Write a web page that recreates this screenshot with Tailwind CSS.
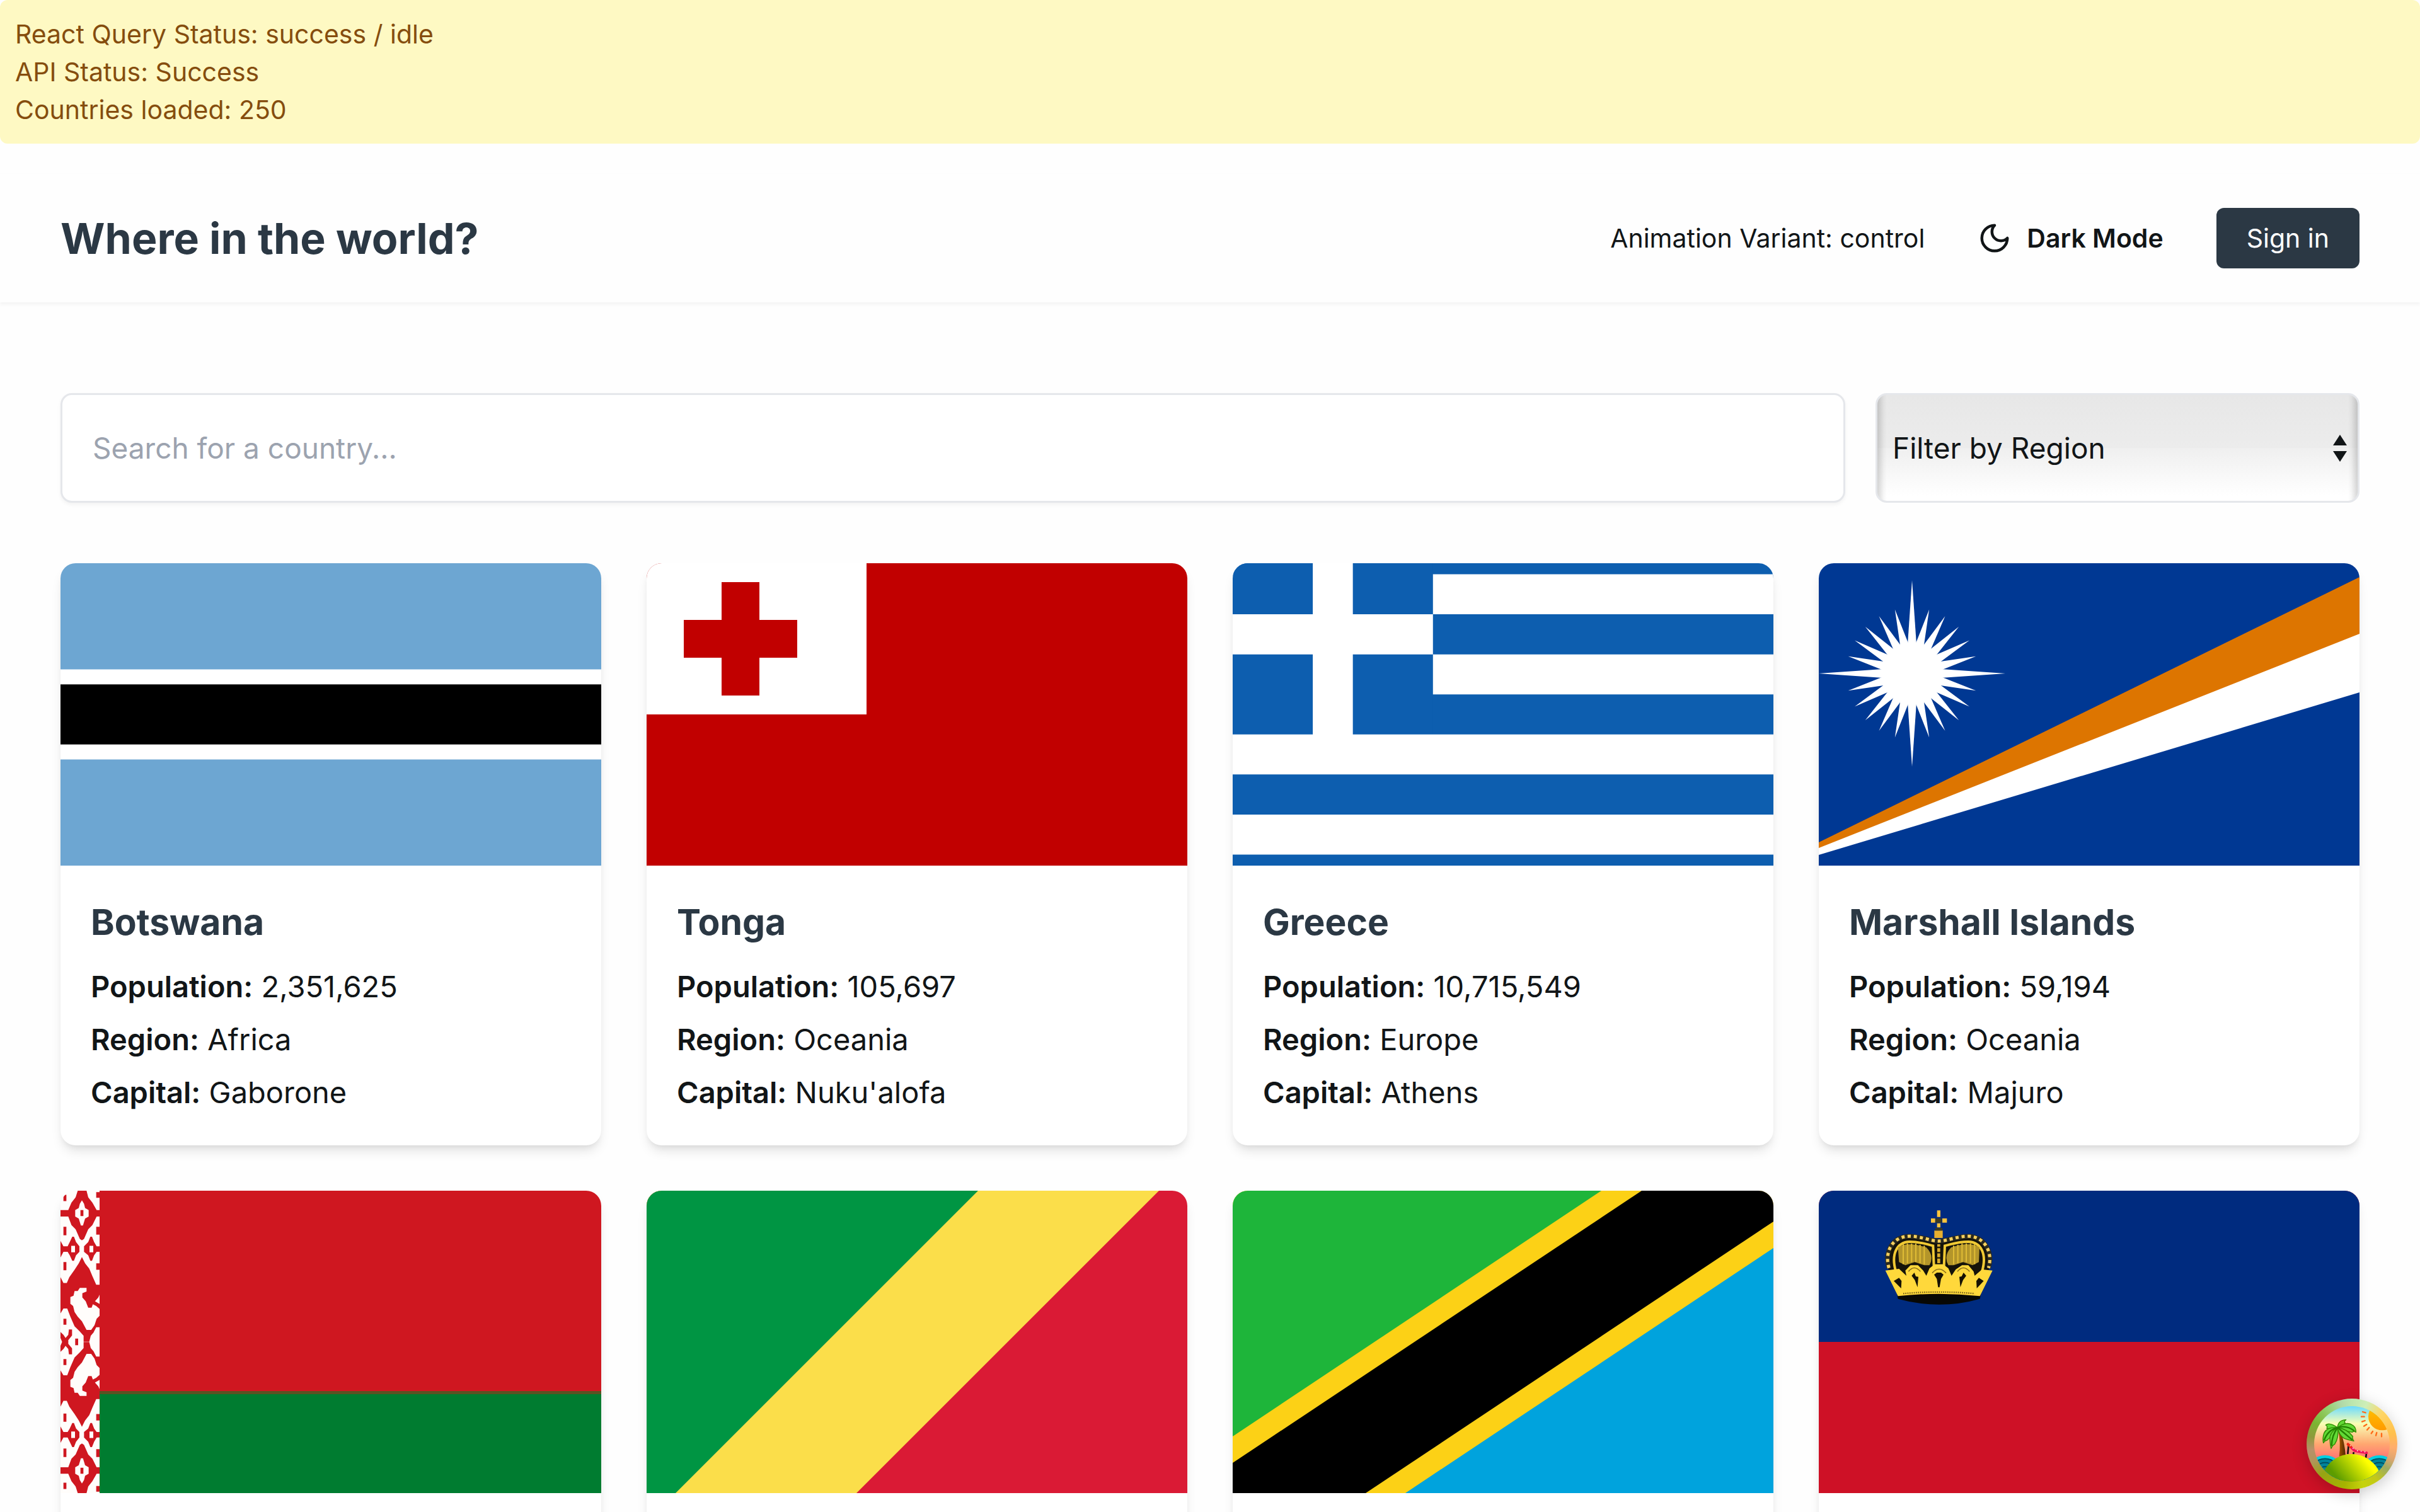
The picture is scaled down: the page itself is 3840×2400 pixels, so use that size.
<!DOCTYPE html>
<html lang="en">
<head>
<meta charset="utf-8">
<title>Where in the world?</title>
<script src="https://cdn.jsdelivr.net/npm/@tailwindcss/browser@4"></script>
</head>
<body class="bg-[#fefefe] font-[Inter,sans-serif] text-[#111517]">

<div class="mb-12 rounded-[12px] bg-[#fef9c3] p-6 text-[41px] leading-[60px] text-[#854d0e]">
  <p>React Query Status: success / idle</p>
  <p>API Status: Success</p>
  <p>Countries loaded: 250</p>
</div>

<header class="flex items-center justify-between px-24 py-12 shadow-[0_3px_6px_rgba(0,0,0,0.05)]">
  <h1 class="text-[68px] leading-[108px] font-bold text-[#2b3844]">Where in the world?</h1>
  <div class="flex items-center text-[41px] leading-[60px]">
    <span class="mr-[84px]">Animation Variant: control</span>
    <button type="button" class="mr-[84px] flex items-center gap-6 font-semibold">
      <svg class="size-[54px]" viewBox="0 0 24 24" fill="none" stroke="currentColor" stroke-width="2" stroke-linecap="round" stroke-linejoin="round" aria-hidden="true"><path d="M12 3a6 6 0 0 0 9 9 9 9 0 1 1-9-9Z"/></svg>
      Dark Mode
    </button>
    <button type="button" class="h-24 rounded-[12px] bg-[#2b3844] px-12 text-white">Sign in</button>
  </div>
</header>

<main class="px-24 pt-36 pb-24">
  <div class="mb-24 flex gap-12">
    <input type="text" aria-label="Search for a country" placeholder="Search for a country..." class="h-[174px] min-w-0 flex-1 rounded-[18px] border-[3px] border-[#e5e7eb] bg-white px-12 text-[46px] shadow-[0_3px_6px_rgba(0,0,0,0.05)] placeholder:text-[#9ca3af]">
    <div class="relative w-[768px]">
      <select aria-label="Filter by Region" class="h-[174px] w-full appearance-none rounded-[18px] border-[3px] border-[#e5e7eb] bg-[linear-gradient(90deg,rgba(0,0,0,0.16),rgba(0,0,0,0.03)_10px,transparent_15px),linear-gradient(270deg,rgba(0,0,0,0.16),rgba(0,0,0,0.03)_10px,transparent_15px),linear-gradient(#e7e7e7,#ececec_50%,#efefef_50%,#ffffff_95%)] px-6 text-[46px]">
        <option>Filter by Region</option>
      </select>
      <svg class="pointer-events-none absolute top-[66px] right-[20px] h-[43px] w-[22px]" viewBox="0 0 22 43" fill="#111517" aria-hidden="true"><path d="M11 0 22 17H0ZM0 26H22L11 43Z"/></svg>
    </div>
  </div>

  <div class="grid grid-cols-4 gap-[72px]">

    <article class="overflow-hidden rounded-[24px] bg-white shadow-[0_12px_18px_-3px_rgba(0,0,0,0.1),0_6px_12px_-6px_rgba(0,0,0,0.1)]">
      <svg class="block h-[480px] w-full" viewBox="0 0 36 24" preserveAspectRatio="xMidYMid slice" role="img" aria-label="Flag of Botswana">
        <rect width="36" height="24" fill="#6da6d2"/><rect y="9" width="36" height="6" fill="#fff"/><rect y="10" width="36" height="4" fill="#000"/>
      </svg>
      <div class="p-12 text-[47px] leading-[72px]">
        <h2 class="mb-6 text-[57px] leading-[84px] font-bold text-[#2b3844]">Botswana</h2>
        <p class="mb-3"><b class="font-semibold">Population:</b> 2,351,625</p>
        <p class="mb-3"><b class="font-semibold">Region:</b> Africa</p>
        <p><b class="font-semibold">Capital:</b> Gaborone</p>
      </div>
    </article>

    <article class="overflow-hidden rounded-[24px] bg-white shadow-[0_12px_18px_-3px_rgba(0,0,0,0.1),0_6px_12px_-6px_rgba(0,0,0,0.1)]">
      <svg class="block h-[480px] w-full" viewBox="0 0 96 48" preserveAspectRatio="xMidYMid slice" role="img" aria-label="Flag of Tonga">
        <rect width="96" height="48" fill="#c10000"/><rect width="40" height="24" fill="#fff"/><path d="M17 3h6v6h6v6h-6v6h-6v-6h-6V9h6Z" fill="#c10000"/>
      </svg>
      <div class="p-12 text-[47px] leading-[72px]">
        <h2 class="mb-6 text-[57px] leading-[84px] font-bold text-[#2b3844]">Tonga</h2>
        <p class="mb-3"><b class="font-semibold">Population:</b> 105,697</p>
        <p class="mb-3"><b class="font-semibold">Region:</b> Oceania</p>
        <p><b class="font-semibold">Capital:</b> Nuku'alofa</p>
      </div>
    </article>

    <article class="overflow-hidden rounded-[24px] bg-white shadow-[0_12px_18px_-3px_rgba(0,0,0,0.1),0_6px_12px_-6px_rgba(0,0,0,0.1)]">
      <svg class="block h-[480px] w-full" viewBox="0 0 27 18" preserveAspectRatio="xMidYMid slice" role="img" aria-label="Flag of Greece">
        <rect width="27" height="18" fill="#0d5eaf"/>
        <path d="M0 3H27M0 7H27M0 15H27" stroke="#fff" stroke-width="2"/>
        <rect width="10" height="10" fill="#0d5eaf"/><path d="M5 0V11M0 5H10M0 11H27" stroke="#fff" stroke-width="2"/>
      </svg>
      <div class="p-12 text-[47px] leading-[72px]">
        <h2 class="mb-6 text-[57px] leading-[84px] font-bold text-[#2b3844]">Greece</h2>
        <p class="mb-3"><b class="font-semibold">Population:</b> 10,715,549</p>
        <p class="mb-3"><b class="font-semibold">Region:</b> Europe</p>
        <p><b class="font-semibold">Capital:</b> Athens</p>
      </div>
    </article>

    <article class="overflow-hidden rounded-[24px] bg-white shadow-[0_12px_18px_-3px_rgba(0,0,0,0.1),0_6px_12px_-6px_rgba(0,0,0,0.1)]">
      <svg class="block h-[480px] w-full" viewBox="0 0 858 480" preserveAspectRatio="xMidYMid slice" role="img" aria-label="Flag of Marshall Islands">
        <rect width="858" height="480" fill="#003893"/>
        <path d="M0 443 858 22V113L0 453Z" fill="#dd7500"/><path d="M0 452 858 112V205L0 463Z" fill="#fff"/>
        <g transform="translate(148 175)" fill="#fff">
          <circle r="48"/>
          <g id="q">
            <path d="M-7-46 0-148 7-46Z"/>
            <path id="ray" d="M-7-45 0-105 7-45Z" transform="rotate(15)"/>
            <use href="#ray" transform="rotate(15)"/><use href="#ray" transform="rotate(30)"/><use href="#ray" transform="rotate(45)"/><use href="#ray" transform="rotate(60)"/>
          </g>
          <use href="#q" transform="rotate(90)"/><use href="#q" transform="rotate(180)"/><use href="#q" transform="rotate(270)"/>
        </g>
      </svg>
      <div class="p-12 text-[47px] leading-[72px]">
        <h2 class="mb-6 text-[57px] leading-[84px] font-bold text-[#2b3844]">Marshall Islands</h2>
        <p class="mb-3"><b class="font-semibold">Population:</b> 59,194</p>
        <p class="mb-3"><b class="font-semibold">Region:</b> Oceania</p>
        <p><b class="font-semibold">Capital:</b> Majuro</p>
      </div>
    </article>

    <article class="overflow-hidden rounded-[24px] bg-white shadow-[0_12px_18px_-3px_rgba(0,0,0,0.1),0_6px_12px_-6px_rgba(0,0,0,0.1)]">
      <svg class="block h-[480px] w-full" viewBox="0 0 858 480" preserveAspectRatio="xMidYMid slice" role="img" aria-label="Flag of Belarus">
        <rect width="62" height="480" fill="#fffdfb"/>
        <g transform="scale(.33333 .33827) translate(-48 -59)">
          <g id="orn" fill="#cf1720">
            <path d="M130 59H172L180 90 200 115 220 150H237V180H220L200 220 180 240 160 285 150 292 140 285 120 240 100 220 85 180H48V150H85L100 115 120 90Z"/>
            <path d="M150 104 160 120 165 140 182 150V180L165 190 155 222H145L135 190 118 180V150L135 140 140 120Z" fill="#fffdfb"/>
            <path d="M143 150H157V178H143ZM62 78H76V108H62ZM62 228H76V268H62ZM62 394H76V432H62ZM218 66H237V92H218ZM218 228H237V265H218ZM218 400H237V430H218Z"/>
            <path d="M48 295 62 320H82L92 300 104 275H112L122 300 138 320V346L122 362 112 388H104L92 362 82 346H62L48 372ZM237 320H220L208 300 198 275H190L180 300 160 320V346L180 362 190 388H198L208 362 220 346H237Z"/>
            <path d="M99 318H117V348H99ZM186 318H204V348H186Z" fill="#fffdfb"/>
            <path d="M150 370 165 400 185 425 200 460 218 500H237V700H218L205 725 192 740 185 768H158V740L140 720 115 695 95 650 80 612H62L48 635V465L62 492H78L90 465 115 430 135 400Z"/>
            <path d="M172 515H140L130 530 115 530 110 552 95 558V590L108 600 115 628 130 650 150 672 172 712H194L210 690 220 660 235 645V615L218 600 202 592 196 608H180L168 578 152 560V540L172 532ZM237 540 228 560 212 578 237 592Z" fill="#fffdfb"/>
            <path d="M62 660H76V688H62ZM118 753H132V769H118ZM48 722 62 735 72 750 85 735 88 710H103V738L85 760V769H56L48 750Z"/>
          </g>
          <use href="#orn" transform="matrix(1 0 0 -1 0 1537)"/>
        </g>
        <rect x="62" width="796" height="320" fill="#cf1720"/><rect x="62" y="320" width="796" height="160" fill="#007c30"/><rect x="62" y="318" width="796" height="5" fill="#5a5222"/>
      </svg>
      <div class="h-[444px] p-12"></div>
    </article>

    <article class="overflow-hidden rounded-[24px] bg-white shadow-[0_12px_18px_-3px_rgba(0,0,0,0.1),0_6px_12px_-6px_rgba(0,0,0,0.1)]">
      <svg class="block h-[480px] w-full" viewBox="0 0 858 480" preserveAspectRatio="xMidYMid slice" role="img" aria-label="Flag of the Republic of the Congo">
        <rect width="858" height="480" fill="#da1a35"/><path d="M0 0H813L333 480H0Z" fill="#fbde4a"/><path d="M0 0H526L46 480H0Z" fill="#009543"/>
      </svg>
      <div class="h-[444px] p-12"></div>
    </article>

    <article class="overflow-hidden rounded-[24px] bg-white shadow-[0_12px_18px_-3px_rgba(0,0,0,0.1),0_6px_12px_-6px_rgba(0,0,0,0.1)]">
      <svg class="block h-[480px] w-full" viewBox="0 0 858 480" preserveAspectRatio="xMidYMid slice" role="img" aria-label="Flag of Tanzania">
        <rect width="858" height="480" fill="#fcd116"/><path d="M0 0H585L0 390Z" fill="#1eb53a"/><path d="M858 480H274L858 91Z" fill="#00a3dd"/><path d="M649 0H858V49L211 480H0V432Z"/>
      </svg>
      <div class="h-[444px] p-12"></div>
    </article>

    <article class="overflow-hidden rounded-[24px] bg-white shadow-[0_12px_18px_-3px_rgba(0,0,0,0.1),0_6px_12px_-6px_rgba(0,0,0,0.1)]">
      <svg class="block h-[480px] w-full" viewBox="0 0 858 480" preserveAspectRatio="xMidYMid slice" role="img" aria-label="Flag of Liechtenstein">
        <rect width="858" height="480" fill="#ce1126"/><rect width="858" height="240" fill="#002b7f"/>
        <g transform="translate(74 0) scale(.33333)">
          <path d="M150 490Q350 470 550 490L545 515Q350 570 155 515Z" fill="#080804"/>
          <path d="M110 375C85 290 125 220 200 215 260 210 310 235 348 250 390 235 440 210 500 215 570 220 610 290 588 375L540 440H160Z" fill="#15130a"/>
          <path d="M112 368C90 295 125 220 205 217 260 215 310 240 348 240 390 240 440 215 495 217 570 222 608 295 586 368" fill="none" stroke="#2a2a20" stroke-width="22"/>
          <path d="M112 368C90 295 125 220 205 217 260 215 310 240 348 240 390 240 440 215 495 217 570 222 608 295 586 368" fill="none" stroke="#f5d060" stroke-width="15" stroke-dasharray="15 14"/>
          <path d="M145 385C120 300 150 245 210 243 260 243 290 255 322 262L326 360M555 385C580 300 550 245 490 243 440 243 410 255 378 262L374 360" fill="none" stroke="#f0c934" stroke-width="12"/>
          <path d="M155 270Q200 240 290 270 330 310 305 355H280L235 340 190 355 160 340ZM543 270Q498 240 408 270 370 310 395 355H420L465 340 510 355 540 340Z" fill="#b3952a"/>
          <path d="M180 255V350M200 252V345M220 252V340M240 252V340M260 258V345M280 262V350M520 255V350M500 252V345M480 252V340M460 252V340M440 258V345M420 262V350" stroke="#e0bc35" stroke-width="6"/>
          <path d="M95 380 160 372 195 405 190 380 215 355 250 355 275 380 290 405 305 370 330 350H370L395 370 410 405 430 375 460 355H490L515 385 520 405 555 375 605 380 545 502Q350 480 155 502Z" fill="#ffd83b"/>
          <path d="M342 255H356V345H342Z" fill="#d9ac2c"/><path d="M340 270H358M340 295H358M340 320H358" stroke="#221c08" stroke-width="7"/>
          <path d="M328 190H368V225H328Z" fill="#e8b030"/><path d="M341 94H357V125H341ZM312 132H332V152H312ZM366 132H388V152H366ZM341 155H357V175H341Z" fill="#fbc33c"/><path d="M334 132H363V152H334ZM332 178H366V190H332Z" fill="#3d3a20"/>
          <path d="M327 400 340 390H360L372 400 360 420 353 460H346L340 420ZM220 405 233 390 240 408 252 410 248 460 235 425ZM480 405 467 390 458 408 447 410 452 460 465 425ZM135 430 160 415 172 430 170 465ZM563 430 540 415 528 430 530 465Z" fill="#171204"/>
          <path d="M205 385Q232 350 262 385M318 392Q350 355 384 392M438 385Q466 350 496 385" fill="none" stroke="#8a701b" stroke-width="5"/>
          <path d="M180 490Q350 475 520 490" fill="none" stroke="#75601a" stroke-width="7" stroke-dasharray="5 5"/>
        </g>
      </svg>
      <div class="h-[444px] p-12"></div>
    </article>

  </div>
</main>

<button type="button" aria-label="Open Tanstack query devtools" class="fixed right-9 bottom-9 size-36 rounded-full bg-[conic-gradient(#bce6ae,#cdeeb8_20deg,#ffd564_45deg,#ffc04c_75deg,#ffad6c_95deg,#dfa570_110deg,#9bab62_125deg,#c4c818_145deg,#c5d30c_165deg,#a6b400_190deg,#96a414_225deg,#b09558_245deg,#b8906a_262deg,#8f9a3c_280deg,#7cb432_300deg,#94cf6c_325deg,#b0d8a8_345deg,#bce6ae)] p-3 shadow-[0_6px_24px_rgba(0,0,0,0.2)]">
  <svg class="size-full" viewBox="156 126 360 360" aria-hidden="true">
    <defs>
      <clipPath id="c"><circle cx="336" cy="306" r="180"/></clipPath>
      <linearGradient id="sky" x1="0" y1="0" x2="0" y2="1"><stop offset="0" stop-color="#6bdaff"/><stop offset=".23" stop-color="#f9ffb5"/><stop offset=".5" stop-color="#ffa770"/><stop offset=".7" stop-color="#ff7373"/></linearGradient>
      <linearGradient id="hill" gradientUnits="userSpaceOnUse" x1="390" y1="370" x2="270" y2="470"><stop offset="0" stop-color="#ffff00"/><stop offset="1" stop-color="#5c9c00"/></linearGradient>
      <linearGradient id="sun" x1="0" y1="0" x2="0" y2="1"><stop offset="0" stop-color="#ffc800"/><stop offset="1" stop-color="#ff9a00"/></linearGradient>
      <linearGradient id="trunk"><stop offset="0" stop-color="#b25c00"/><stop offset="1" stop-color="#4d2600"/></linearGradient>
    </defs>
    <g clip-path="url(#c)">
      <rect x="156" y="126" width="360" height="360" fill="url(#sky)"/>
      <circle cx="480" cy="175" r="66" fill="url(#sun)"/>
      <path d="M387 153 401 157M381 176H395M384 200 398 195M393 221 406 213M408 239 418 228M428 256 435 246M450 266 454 252M477 271V256" stroke="#ff6a18" stroke-width="7" stroke-linecap="round"/>
      <g fill="#00839a" stroke="#004b5c" stroke-width="5"><circle cx="208" cy="450" r="90" fill="#00cfe2" stroke="none"/><circle cx="208" cy="450" r="74"/><circle cx="208" cy="450" r="55"/><circle cx="208" cy="450" r="36"/><circle cx="466" cy="450" r="90" fill="#00cfe2" stroke="none"/><circle cx="466" cy="450" r="74"/><circle cx="466" cy="450" r="55"/><circle cx="466" cy="450" r="36"/></g>
      <path d="M270 240H281Q302 300 306 365H275Q284 300 270 240Z" fill="url(#trunk)"/>
      <path d="M320 312 316 354M344 345 343 356M405 350 402 372" stroke="#111" stroke-width="8"/>
      <path d="M317 307 348 338Q372 345 406 348" fill="none" stroke="#f0145a" stroke-width="12" stroke-linecap="round"/><path d="M317 307 330 320" stroke="#f02a10" stroke-width="12" stroke-linecap="round"/>
      <path d="M327 313 345 330M360 338 402 344" stroke="#fff" stroke-width="5" stroke-dasharray="4 14"/>
      <g fill="#62d936" stroke="#2f8a00" stroke-width="4" stroke-linejoin="round">
        <path d="M268 228Q228 200 211 216 222 222 216 232 245 236 268 228Z"/><path d="M268 226Q270 193 308 191 296 198 304 206 292 222 268 228Z"/><path d="M268 228Q310 195 342 218 356 230 355 250 345 243 338 250 300 246 268 228Z"/><path d="M268 228Q215 225 203 255 195 280 200 301 206 290 218 288 245 265 268 228Z"/><path d="M268 228Q228 252 231 285 232 310 237 328 243 312 254 307 275 275 268 228Z"/><path d="M268 228Q272 262 300 280 322 288 345 292 337 280 340 270 315 235 268 228Z"/>
      </g>
      <path d="M268 228Q220 240 203 290M268 228Q240 265 239 315M268 228Q300 255 338 287M268 228Q310 215 348 244" fill="none" stroke="#238000" stroke-width="7"/>
      <circle cx="334" cy="500" r="146" fill="url(#hill)"/>
    </g>
  </svg>
</button>
</body>
</html>
